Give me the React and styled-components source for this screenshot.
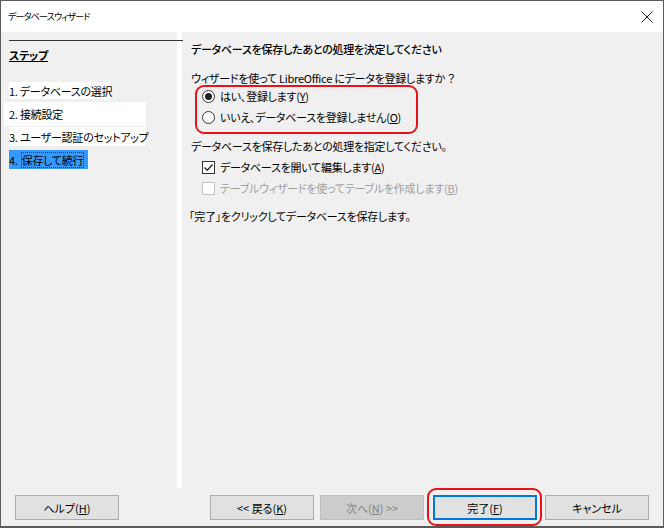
import styled, { createGlobalStyle } from 'styled-components'

const GlobalStyle = createGlobalStyle`
  html, body {
    margin: 0;
    padding: 0;
    background: #ffffff;
  }
  body {
    font-family: "Noto Sans CJK JP", "Noto Sans", sans-serif;
    font-feature-settings: "palt";
    font-size: 11px;
    letter-spacing: -0.25px;
    color: #000;
  }
`

const Window = styled.div`
  box-sizing: border-box;
  width: 664px;
  height: 528px;
  border: 1px solid #5a5a5a;
  border-bottom-width: 2px;
  display: flex;
  flex-direction: column;
  background: #f0f0f0;
`

const TitleBar = styled.div`
  height: 31px;
  flex: none;
  background: #fff;
  display: flex;
  align-items: center;
  justify-content: space-between;
  padding: 0 10px 0 7px;
  font-size: 9px;
  letter-spacing: -0.8px;
`

const Main = styled.div`
  height: 456px;
  flex: none;
  display: flex;
`

const LeftPane = styled.div`
  width: 168px;
  padding-left: 8px;
  position: relative;
  z-index: 1;
`

const StepsHeader = styled.div`
  width: 174px;
  margin-top: 8px;
  border-top: 1px solid #333;
  padding-top: 6px;
  font-weight: bold;
  text-decoration: underline;
  line-height: 16px;
  height: 32px;
`

const StepRow = styled.div`
  height: 23px;
  display: flex;
  align-items: center;
`

const StepLabel = styled.span`
  box-sizing: border-box;
  display: inline-flex;
  align-items: center;
  width: ${(p) => p.$w}px;
  height: ${(p) => p.$h || 17}px;
  margin-left: ${(p) => p.$shift || 0}px;
  padding-left: ${(p) => -(p.$shift || 0)}px;
  background: ${(p) => (p.$active ? '#3399ff' : '#ffffff')};
  white-space: nowrap;
`

const Focus = styled.span`
  outline: 1px dotted #333;
  outline-offset: -1px;
  padding: 0 1px;
  margin-left: 3px;
`

const Separator = styled.div`
  width: 5px;
  background: #fff;
`

const RightPane = styled.div`
  flex: 1;
  padding: 8px 0 0 9px;
  display: flex;
  flex-direction: column;
  align-items: flex-start;
  line-height: 18px;
  white-space: nowrap;
`

const Heading = styled.div`
  font-weight: 500;
`

const Text = styled.div`
  margin-top: ${(p) => p.$mt || 0}px;
  margin-left: ${(p) => p.$ml || 0}px;
`

const RadioGroup = styled.div`
  box-sizing: border-box;
  width: 223px;
  margin: -2px 0 0 4px;
  border: 2px solid #e8121b;
  border-radius: 9px;
  padding: 0 0 6px 5px;
  display: flex;
  flex-direction: column;
  gap: 3px;
`

const OptionRow = styled.label`
  display: flex;
  align-items: center;
  gap: 5px;
  height: 18px;
  margin-left: ${(p) => p.$ml || 0}px;
  margin-top: ${(p) => p.$mt || 0}px;
  color: ${(p) => (p.$disabled ? '#a0a0a0' : '#000')};
`

const RadioCircle = styled.span`
  box-sizing: border-box;
  width: 13px;
  height: 13px;
  border-radius: 50%;
  border: 1px solid #333;
  background: #fff;
  display: flex;
  align-items: center;
  justify-content: center;

  &::after {
    content: '';
    width: 7px;
    height: 7px;
    border-radius: 50%;
    background: ${(p) => (p.$checked ? '#222' : 'transparent')};
  }
`

const CheckBox = styled.span`
  box-sizing: border-box;
  width: 13px;
  height: 13px;
  border: 1px solid ${(p) => (p.$disabled ? '#c4c4c4' : '#333')};
  background: #fff;
  display: flex;
  align-items: center;
  justify-content: center;
`

const U = styled.span`
  text-decoration: underline;
`

const Footer = styled.div`
  flex: 1;
  display: flex;
  align-items: flex-start;
  padding: 7px 13px 0 14px;
`

const Button = styled.button`
  box-sizing: border-box;
  width: 104px;
  height: 25px;
  margin-left: ${(p) => p.$ml || 0}px;
  font: inherit;
  font-size: 11px;
  color: ${(p) => (p.$disabled ? '#838383' : '#000')};
  background: ${(p) => (p.$disabled ? '#cccccc' : '#e1e1e1')};
  border: ${(p) =>
    p.$default ? '2px solid #0078d7' : `1px solid ${p.$disabled ? '#bfbfbf' : '#adadad'}`};
  padding: 0;
  display: flex;
  align-items: center;
  justify-content: center;
`

const Highlight = styled.div`
  margin: -7px 3px 0 3px;
  padding: 5px 3px 4px 4px;
  border: 2px solid #e8121b;
  border-radius: 9px;
  display: flex;
`

function CloseIcon() {
  return (
    <svg width="12" height="12" viewBox="0 0 12 12">
      <path d="M0.5 0.5 L11.5 11.5 M11.5 0.5 L0.5 11.5" stroke="#222" strokeWidth="1" />
    </svg>
  )
}

function CheckMark() {
  return (
    <svg width="11" height="11" viewBox="0 0 11 11">
      <polyline points="1.5,5.5 4.3,8.3 9.5,2.5" fill="none" stroke="#222" strokeWidth="1.3" />
    </svg>
  )
}

const steps = [
  { label: '1. データベースの選択', w: 101 },
  { label: '2. 接続設定', w: 142, h: 24, shift: -5 },
  { label: '3. ユーザー認証のセットアップ', w: 136, h: 19 },
]

export default function App() {
  return (
    <>
      <GlobalStyle />
      <Window>
        <TitleBar>
          <span>データベースウィザード</span>
          <CloseIcon />
        </TitleBar>
        <Main>
          <LeftPane>
            <StepsHeader>ステップ</StepsHeader>
            {steps.map((s) => (
              <StepRow key={s.label}>
                <StepLabel $w={s.w} $h={s.h} $shift={s.shift}>
                  {s.label}
                </StepLabel>
              </StepRow>
            ))}
            <StepRow>
              <StepLabel $w={79} $h={19} $active>
                4.<Focus>保存して続行</Focus>
              </StepLabel>
            </StepRow>
          </LeftPane>
          <Separator />
          <RightPane>
            <Heading>データベースを保存したあとの処理を決定してください</Heading>
            <Text $mt={11}>ウィザードを使って LibreOffice にデータを登録しますか ？</Text>
            <RadioGroup>
              <OptionRow>
                <RadioCircle $checked />
                <span>
                  はい、登録します(<U>Y</U>)
                </span>
              </OptionRow>
              <OptionRow>
                <RadioCircle />
                <span>
                  いいえ、データベースを登録しません(<U>O</U>)
                </span>
              </OptionRow>
            </RadioGroup>
            <Text $mt={3}>データベースを保存したあとの処理を指定してください。</Text>
            <OptionRow $ml={11} $mt={3}>
              <CheckBox>
                <CheckMark />
              </CheckBox>
              <span>
                データベースを開いて編集します(<U>A</U>)
              </span>
            </OptionRow>
            <OptionRow $ml={11} $mt={3} $disabled>
              <CheckBox $disabled />
              <span>
                テーブルウィザードを使ってテーブルを作成します(<U>B</U>)
              </span>
            </OptionRow>
            <Text $mt={10} $ml={-2}>
              「完了」をクリックしてデータベースを保存します。
            </Text>
          </RightPane>
        </Main>
        <Footer>
          <Button>
            ヘルプ(<U>H</U>)
          </Button>
          <Button $ml={91}>
            &lt;&lt; 戻る(<U>K</U>)
          </Button>
          <Button $ml={6} $disabled>
            次へ(<U>N</U>) &gt;&gt;
          </Button>
          <Highlight>
            <Button $default>
              完了(<U>F</U>)
            </Button>
          </Highlight>
          <Button>キャンセル</Button>
        </Footer>
      </Window>
    </>
  )
}
